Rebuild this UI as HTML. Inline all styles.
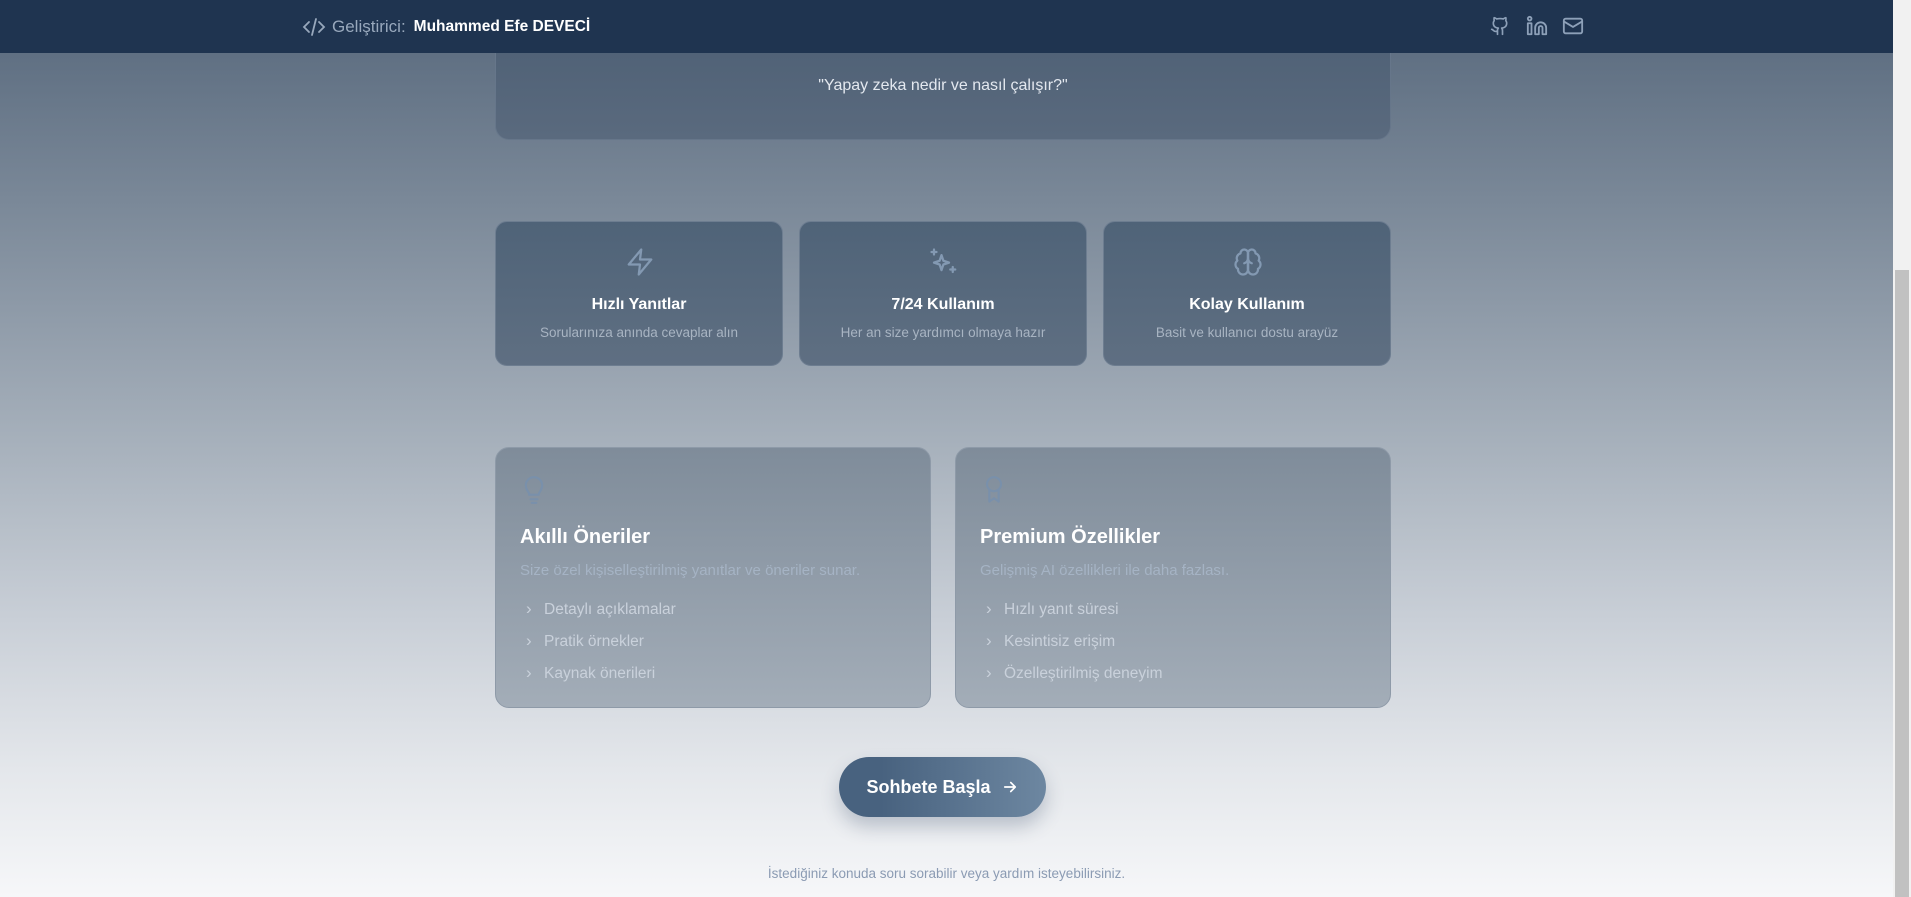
<!DOCTYPE html>
<html><head><meta charset="utf-8"><style>
*{margin:0;padding:0;box-sizing:border-box}
html,body{width:1911px;height:897px;overflow:hidden}
body{font-family:"Liberation Sans",sans-serif;background:linear-gradient(180deg,#56677b 0px,#7a8898 200px,#a6b0bb 440px,#c9cfd7 620px,#e4e7eb 770px,#f6f7f9 897px);position:relative}
.hdr{position:absolute;left:0;top:0;width:1893px;height:53px;background:#1f3450}
.abs{position:absolute}
.scroll{position:absolute;right:0;top:0;width:18px;height:897px;background:#f1f1f1}
.thumb{position:absolute;right:2px;top:270px;width:14px;height:627px;background:#c1c1c1}
.topcard{left:495px;top:30px;width:896px;height:110px;border-radius:0 0 14px 14px;background:linear-gradient(180deg,#4e6075,#5a6a7e);border:1px solid #66768a;border-top:none}
.fc{top:221px;width:288px;height:145px;border-radius:12px;background:linear-gradient(180deg,#4f6378,#5f6f82);border:1px solid #6d7d90;text-align:center;color:#fff}
.fc svg{position:absolute;left:129px;top:25px}
.fc h3{position:absolute;left:0;right:0;top:74px;font-size:16px;font-weight:bold}
.fc p{position:absolute;left:0;right:0;top:103px;font-size:13.5px;color:#a8b4c2}
.bc{top:447px;width:436px;height:261px;border-radius:14px;background:linear-gradient(180deg,#7f8c9a,#a3adb8);border:1px solid #8e9aa8;color:#fff}
.bc svg{position:absolute;left:24px;top:25px}
.bc h2{position:absolute;left:24px;top:78px;font-size:20px;font-weight:bold}
.bc .d{position:absolute;left:24px;top:114px;font-size:15px;color:#a5b3c4}
.bc ul{position:absolute;left:24px;top:153px;list-style:none;font-size:15.5px;color:#c9d1db}
.bc li{height:32px;padding-left:24px;position:relative}
.bc li:before{content:"›";position:absolute;left:6px;top:-2px;font-size:17px}
.btn{left:839px;top:757px;width:207px;height:60px;border-radius:30px;background:linear-gradient(90deg,#48627f 20%,#6d87a1);box-shadow:0 10px 18px rgba(40,60,90,.25);color:#fff;font-weight:bold;font-size:18px;display:flex;align-items:center;justify-content:center;gap:10px}
</style></head><body>
<div class="abs topcard"></div>
<div class="abs" style="left:495px;width:896px;top:77px;text-align:center;color:#e3e8ef;font-size:16px">"Yapay zeka nedir ve nasıl çalışır?"</div>
<div class="hdr"></div>
<div class="abs" style="left:302px;top:17px;color:#98a8bc;font-size:17px;display:flex;align-items:center;gap:6px">
<svg width="24" height="20" viewBox="0 0 24 20" fill="none" stroke="#98a8bc" stroke-width="1.8" stroke-linecap="round"><path d="M7 5 2 10l5 5M17 5l5 5-5 5M14 2l-4 16"/></svg>
<span>Geliştirici:</span><b style="color:#fff;font-size:15.5px;margin-left:2px">Muhammed Efe DEVECİ</b></div>
<svg class="abs" style="left:1490px;top:15px" width="20" height="22" viewBox="0 0 24 24" fill="none" stroke="#8da0b8" stroke-width="2" stroke-linecap="round" stroke-linejoin="round"><path d="M15 22v-4a4.8 4.8 0 0 0-1-3.5c3 0 6-2 6-5.5.08-1.250-.27-2.48-1-3.5.28-1.15.28-2.35 0-3.5 0 0-1 0-3 1.5-2.64-.5-5.36-.5-8 0C6 2 5 2 5 2c-.3 1.15-.3 2.35 0 3.5A5.4 5.4 0 0 0 4 9c0 3.5 3 5.5 6 5.5-.39.49-.68 1.05-.85 1.65S8.93 17.38 9 18v4M9 18c-4.51 2-5-2-7-2"/></svg>
<svg class="abs" style="left:1526px;top:15px" width="22" height="22" viewBox="0 0 24 24" fill="none" stroke="#8da0b8" stroke-width="2" stroke-linecap="round" stroke-linejoin="round"><path d="M16 8a6 6 0 0 1 6 6v7h-4v-7a2 2 0 0 0-4 0v7h-4v-7a6 6 0 0 1 6-6zM2 9h4v12H2z"/><circle cx="4" cy="4" r="2"/></svg>
<svg class="abs" style="left:1562px;top:15px" width="22" height="22" viewBox="0 0 24 24" fill="none" stroke="#8da0b8" stroke-width="2" stroke-linecap="round" stroke-linejoin="round"><rect x="2" y="4" width="20" height="16" rx="2"/><path d="m22 7-10 6L2 7"/></svg>

<div class="abs fc" style="left:495px"><svg width="30" height="30" viewBox="0 0 24 24" fill="none" stroke="#8399b2" stroke-width="1.8" stroke-linejoin="round"><path d="M13 2 3 14h9l-1 8 10-12h-9l1-8z"/></svg><h3>Hızlı Yanıtlar</h3><p>Sorularınıza anında cevaplar alın</p></div>
<div class="abs fc" style="left:799px"><svg width="30" height="30" viewBox="0 0 24 24" fill="none" stroke="#8399b2" stroke-width="1.8" stroke-linecap="round" stroke-linejoin="round"><path d="M10 6.5 11.5 11l4.5 1.5-4.5 1.5L10 18.5 8.5 14 4 12.5 8.5 11z"/><path d="M4 2v4M2 4h4M19 16v4M17 18h4"/></svg><h3>7/24 Kullanım</h3><p>Her an size yardımcı olmaya hazır</p></div>
<div class="abs fc" style="left:1103px"><svg width="30" height="30" viewBox="0 0 24 24" fill="none" stroke="#8399b2" stroke-width="1.8" stroke-linecap="round" stroke-linejoin="round"><path d="M12 5a3 3 0 1 0-5.997.125 4 4 0 0 0-2.526 5.77 4 4 0 0 0 .556 6.588A4 4 0 1 0 12 18Z"/><path d="M12 5a3 3 0 1 1 5.997.125 4 4 0 0 1 2.526 5.77 4 4 0 0 1-.556 6.588A4 4 0 1 1 12 18Z"/><path d="M12 5v13M9 13a4.5 4.5 0 0 0 3-4M15 13a4.5 4.5 0 0 1-3-4"/></svg><h3>Kolay Kullanım</h3><p>Basit ve kullanıcı dostu arayüz</p></div>

<div class="abs bc" style="left:495px"><svg width="28" height="34" viewBox="0 0 24 28" fill="none" stroke="#7990ab" stroke-width="1.8" stroke-linecap="round"><path d="M8 18c0-2-3-4-3-8a7 7 0 0 1 14 0c0 4-3 6-3 8zM9 22h6M10 25h4"/></svg><h2>Akıllı Öneriler</h2><div class="d">Size özel kişiselleştirilmiş yanıtlar ve öneriler sunar.</div><ul><li>Detaylı açıklamalar</li><li>Pratik örnekler</li><li>Kaynak önerileri</li></ul></div>
<div class="abs bc" style="left:955px"><svg width="28" height="34" viewBox="0 0 24 28" fill="none" stroke="#7990ab" stroke-width="1.8" stroke-linejoin="round"><circle cx="12" cy="9" r="6"/><path d="M8 14v10l4-3 4 3V14"/></svg><h2>Premium Özellikler</h2><div class="d">Gelişmiş AI özellikleri ile daha fazlası.</div><ul><li>Hızlı yanıt süresi</li><li>Kesintisiz erişim</li><li>Özelleştirilmiş deneyim</li></ul></div>

<div class="abs btn"><span>Sohbete Başla</span><svg width="18" height="18" viewBox="0 0 24 24" fill="none" stroke="#fff" stroke-width="2.2" stroke-linecap="round" stroke-linejoin="round"><path d="M5 12h14M13 6l6 6-6 6"/></svg></div>
<div class="abs" style="left:0;width:1893px;top:866px;text-align:center;font-size:13.5px;color:#8b9bb3">İstediğiniz konuda soru sorabilir veya yardım isteyebilirsiniz.</div>
<div class="scroll"><div class="thumb"></div></div>
</body></html>
